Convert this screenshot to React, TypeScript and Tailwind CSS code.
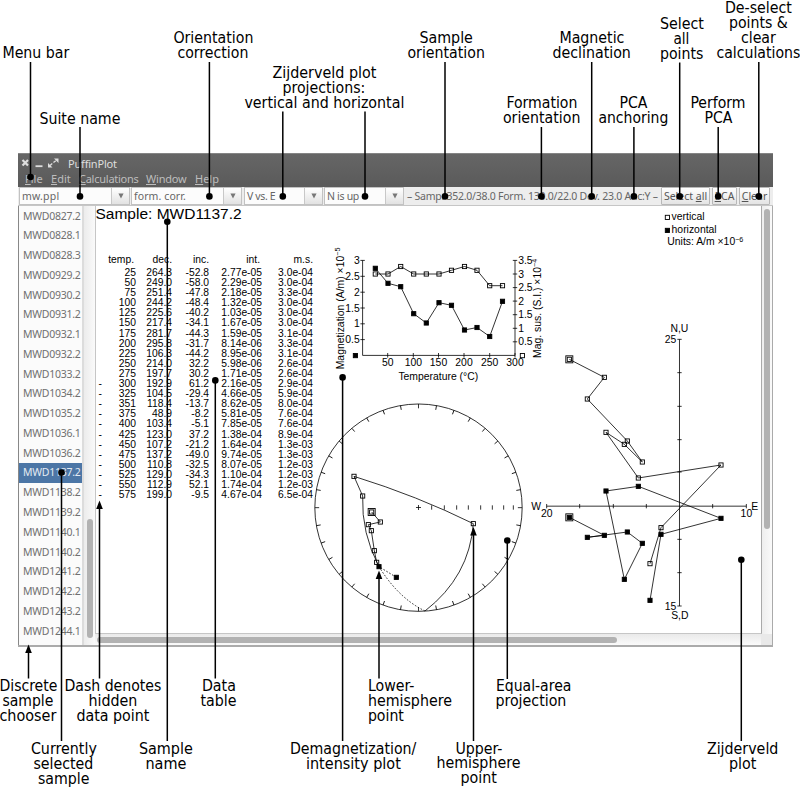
import React from "react";

const samples = [
  "MWD0827.2", "MWD0828.1", "MWD0828.3", "MWD0929.2", "MWD0930.2", "MWD0931.2", "MWD0932.1", "MWD0932.2",
  "MWD1033.2", "MWD1034.2", "MWD1035.2", "MWD1036.1", "MWD1036.2", "MWD1137.2", "MWD1138.2", "MWD1139.2",
  "MWD1140.1", "MWD1140.2", "MWD1241.2", "MWD1242.2", "MWD1243.2", "MWD1244.1",
];

// hidden marker, temperature, declination, inclination, intensity, susceptibility
const rows: string[][] = [
  ["", "25", "264.3", "-52.8", "2.77e-05", "3.0e-04"],
  ["", "50", "249.0", "-58.0", "2.29e-05", "3.0e-04"],
  ["", "75", "251.4", "-47.8", "2.18e-05", "3.3e-04"],
  ["", "100", "244.2", "-48.4", "1.32e-05", "3.0e-04"],
  ["", "125", "225.6", "-40.2", "1.03e-05", "3.0e-04"],
  ["", "150", "217.4", "-34.1", "1.67e-05", "3.0e-04"],
  ["", "175", "281.7", "-44.3", "1.59e-05", "3.1e-04"],
  ["", "200", "295.8", "-31.7", "8.14e-06", "3.3e-04"],
  ["", "225", "106.3", "-44.2", "8.95e-06", "3.1e-04"],
  ["", "250", "214.0", "32.2", "5.98e-06", "2.6e-04"],
  ["", "275", "197.7", "30.2", "1.71e-05", "2.6e-04"],
  ["-", "300", "192.9", "61.2", "2.16e-05", "2.9e-04"],
  ["-", "325", "104.5", "-29.4", "4.66e-05", "5.9e-04"],
  ["-", "351", "118.4", "-13.7", "8.62e-05", "8.0e-04"],
  ["-", "375", "48.9", "-8.2", "5.81e-05", "7.6e-04"],
  ["-", "400", "103.4", "-5.1", "7.85e-05", "7.6e-04"],
  ["-", "425", "123.0", "37.2", "1.38e-04", "8.9e-04"],
  ["-", "450", "107.2", "-21.2", "1.64e-04", "1.3e-03"],
  ["-", "475", "137.2", "-49.0", "9.74e-05", "1.3e-03"],
  ["-", "500", "110.8", "-32.5", "8.07e-05", "1.2e-03"],
  ["-", "525", "129.0", "-34.3", "1.10e-04", "1.2e-03"],
  ["-", "550", "112.9", "52.1", "1.74e-04", "1.2e-03"],
  ["-", "575", "199.0", "-9.5", "4.67e-04", "6.5e-04"],
];

type Pt = [number, number];
const path = (pts: Pt[]) => pts.map((p) => p.join(",")).join(" ");

function Marks({ pts, filled, s = 4.2, w = 0.9 }: { pts: Pt[]; filled?: boolean; s?: number; w?: number }) {
  return (
    <>
      {pts.map(([x, y], i) => (
        <rect key={i} x={x - s / 2} y={y - s / 2} width={s} height={s} fill={filled ? "#000" : "none"} stroke="#000" strokeWidth={w} />
      ))}
    </>
  );
}

const susceptibility: Pt[] = [[375.3, 274], [388, 274], [400.7, 266.5], [413.7, 274], [426.3, 274], [439, 274], [451.5, 270.3], [464.5, 266.5], [477, 270.3], [489.7, 285.7], [502.5, 285.7]];
const intensity: Pt[] = [[375.3, 268.3], [388, 283.3], [400.7, 286.7], [413.7, 313.7], [426.3, 323], [439, 302.7], [451.5, 305.3], [464.5, 330], [477, 327.5], [489.7, 336.5], [502.5, 301.3]];

function IntensityPlot() {
  const xt: [number, string][] = [[387.7, "50"], [413.3, "100"], [438.5, "150"], [464, "200"], [489.7, "250"], [515, "300"]];
  const lt: [number, string][] = [[260.4, "3"], [276.3, "2.5"], [292.2, "2"], [308, "1.5"], [323.8, "1"], [339.6, "0.5"]];
  const rt: [number, string][] = [[260.4, "3.5"], [274, "3"], [287.6, "2.5"], [301.1, "2"], [314.7, "1.5"], [328.3, "1"], [341.8, "0.5"]];
  return (
    <g>
      <g stroke="#000" strokeWidth="0.8" fill="none">
        <path d="M362.6 260.4V355.4H515V260.4" />
        {xt.map(([x]) => <path key={x} d={`M${x} 353V357.6`} />)}
        {lt.map(([y]) => <path key={y} d={`M360.4 ${y}H364.8`} />)}
        {rt.map(([y]) => <path key={y} d={`M512.8 ${y}H517.2`} />)}
        <polyline points={path(susceptibility)} />
        <polyline points={path(intensity)} />
      </g>
      <Marks pts={susceptibility} />
      <Marks pts={intensity} filled />
      <Marks pts={[[355.4, 355.6]]} filled />
      <Marks pts={[[522.4, 355.6]]} />
      {xt.map(([x, t]) => <text key={t} x={x} y="366" textAnchor="middle">{t}</text>)}
      {lt.map(([y, t]) => <text key={t} x="359.8" y={y + 3.6} textAnchor="end">{t}</text>)}
      {rt.map(([y, t]) => <text key={t} x="518.2" y={y + 3.6}>{t}</text>)}
      <text x="438.3" y="379.6" textAnchor="middle">Temperature (°C)</text>
      <text transform="translate(344.4 369.3) rotate(-90)">Magnetization (A/m) ×10<tspan dy="-4" fontSize="7.2">−5</tspan></text>
      <text transform="translate(541 358) rotate(-90)">Mag. sus. (S.I.) ×10<tspan dy="-4" fontSize="7.2">−4</tspan></text>
    </g>
  );
}

// Polar and Zijderveld geometry is held in a unit grid three times finer than a pixel.
const stereoOpen: Pt[] = [[185, 366], [211, 396], [175, 404], [184, 422], [193, 482], [200, 517], [158, 318], [132, 259], [490, 401]];

function EqualAreaPlot() {
  return (
    <g transform="translate(310 390) scale(0.333333)" stroke="#000" strokeWidth="2.4" fill="none">
      <circle cx="325.5" cy="353" r="311" />
      {Array.from({ length: 36 }, (_, i) => (
        <path key={i} d="M325.5 42V55" transform={`rotate(${i * 10} 325.5 353)`} />
      ))}
      <path d="M318 352.500H333M325.500 345V360" />
      {[365, 403, 440, 475, 512, 547, 581, 610].map((x) => <path key={x} d={`M${x} 346V359`} />)}
      <polyline points="185,366 211,396 175,404 184,422 193,482 200,517 207,530" />
      <path d="M207 530Q154 430 158 318L132 259Q322 318 490 401Q478 560 345 663" />
      <path d="M345 663Q265 624 207 530L259 562" strokeDasharray="5 5" />
      <Marks pts={stereoOpen} s={12.5} w={2.7} />
      <Marks pts={[[185, 366]]} s={21} w={2.7} />
      <Marks pts={[[207, 530], [259, 562]]} filled s={12.5} w={2.7} />
    </g>
  );
}

const zVertical: Pt[] = [[133, 133], [238, 187], [187, 252], [307, 378], [352, 441], [298, 388], [243, 352], [340, 489], [588, 450], [408, 638], [375, 746]];
const zHorizontal: Pt[] = [[133, 607], [238, 661], [187, 667], [307, 651], [352, 685], [298, 793], [243, 528], [340, 514], [588, 610], [408, 658], [375, 856]];

function ZijderveldPlot() {
  return (
    <g>
      <g transform="translate(525 315) scale(0.333333)" stroke="#000" strokeWidth="2.4" fill="none">
        <path d="M463.500 73V873M65 573.500H664" />
        {[73, 173, 274, 374, 471, 673, 773, 873].map((y) => <path key={y} d={`M457 ${y}H470`} />)}
        {[65, 164, 265, 364, 563, 664].map((x) => <path key={x} d={`M${x} 567V580`} />)}
        <polyline points={path(zVertical)} />
        <polyline points={path(zHorizontal)} />
        <Marks pts={zVertical} s={12.5} w={2.7} />
        <Marks pts={zHorizontal} filled s={12.5} w={2.7} />
        <Marks pts={[[133, 133], [133, 607]]} s={21} w={2.7} />
      </g>
      <text x="679.4" y="332.4" textAnchor="middle">N,U</text>
      <text x="676.4" y="342.8" textAnchor="end">25</text>
      <text x="676.4" y="610" textAnchor="end">15</text>
      <text x="679.8" y="618.8" textAnchor="middle">S,D</text>
      <text x="531.3" y="510">W</text>
      <text x="751.2" y="510">E</text>
      <text x="546.7" y="517" textAnchor="middle">20</text>
      <text x="746.4" y="517" textAnchor="middle">10</text>
      <Marks pts={[[667.4, 217.4]]} />
      <Marks pts={[[667.4, 230.4]]} filled />
      <text x="671.6" y="219.8">vertical</text>
      <text x="671.6" y="232.8">horizontal</text>
      <text x="667.3" y="245.4">Units: A/m ×10<tspan dy="-3.600" fontSize="7.200">−6</tspan></text>
    </g>
  );
}

function Combo({ label, className, gap }: { label: string; className: string; gap: string }) {
  return (
    <div className={`flex h-[18px] border border-[#c2c2c2] bg-[#fcfcfc] ${className}`}>
      <span className={`flex-1 pl-[2px] text-[10.5px] leading-[16px] whitespace-nowrap text-[#666] ${gap}`}>{label}</span>
      <span className="flex w-[18px] items-center justify-center border-l border-[#c8c8c8] bg-gradient-to-b from-white to-[#e2e2e2]">
        <svg width="6" height="6" viewBox="0 0 6 6"><path d="M0.400 0.500H5.600L3 5.500Z" fill="#777" /></svg>
      </span>
    </div>
  );
}

function ToolButton({ children, className }: { children: React.ReactNode; className: string }) {
  return (
    <div className={`h-[18px] rounded-[1px] border border-[#b8b8b8] bg-gradient-to-b from-white to-[#e4e4e4] text-center text-[10.5px] leading-[16px] whitespace-nowrap text-[#555] ${className}`}>
      {children}
    </div>
  );
}

const cols = "grid grid-cols-[7px_33px_36px_37px_53px_51px] text-right";

function AppWindow() {
  return (
    <div className="mt-[153px] ml-[18px] flex h-[494px] w-[755px] flex-col border-b-2 border-[#ababab] font-['Noto_Sans',sans-serif]">
      <div className="h-[34px] shrink-0 border-t border-[#858585] bg-gradient-to-b from-[#666] to-[#5a5a5a]">
        <div className="flex h-[17px] items-center pl-[3px]">
          <svg width="42" height="12" viewBox="0 0 42 12" fill="none" stroke="#dedede">
            <path d="M1.500 3L7 8.500M7 3L1.500 8.500" strokeWidth="2.200" />
            <path d="M14.500 9.200H21.500" strokeWidth="1.800" />
            <path d="M29 8.500L35 3.500" strokeWidth="1.300" strokeDasharray="3 1.500" />
            <path d="M33 1.500H37.500V6ZM27 6V10.500H31.500Z" fill="#dedede" stroke="none" />
          </svg>
          <span className="ml-[5px] pt-px text-[11px] leading-[15px] tracking-[-0.2px] text-[#dedede]">PuffinPlot</span>
        </div>
        <div className="flex h-[16px] items-center pl-[7px] text-[11px] leading-[16px] whitespace-nowrap text-[#bdbdbd]">
          <span className="w-[26px]"><u>F</u>ile</span>
          <span className="w-[28px]"><u>E</u>dit</span>
          <span className="w-[67px] tracking-[-0.25px]"><u>C</u>alculations</span>
          <span className="w-[49px] tracking-[-0.2px]"><u>W</u>indow</span>
          <span><u>H</u>elp</span>
        </div>
      </div>
      <div className="flex h-[19px] shrink-0 items-center border-b border-[#c6c6c6] bg-[#ededed] pl-[1px]">
        <Combo label="mw.ppl" className="w-[111px]" gap="tracking-[0.2px]" />
        <Combo label="form. corr." className="ml-[1px] w-[111px]" gap="tracking-[0.1px]" />
        <Combo label="V vs. E" className="ml-[2px] w-[79px]" gap="tracking-[-0.35px]" />
        <Combo label="N is up" className="ml-[1px] w-[80px]" gap="tracking-[-0.3px]" />
        <span className="w-[257px] pl-[3px] text-[10.5px] leading-[16px] tracking-[-0.25px] whitespace-nowrap text-[#666]">– Samp. 352.0/38.0 Form. 130.0/22.0 Dev. 23.0 Anc:Y –</span>
        <ToolButton className="w-[49px]">Select <u>a</u>ll</ToolButton>
        <ToolButton className="ml-[2px] w-[25px]"><u>P</u>CA</ToolButton>
        <ToolButton className="ml-[2px] w-[31px]"><u>C</u>lear</ToolButton>
      </div>
      <div className="flex min-h-0 flex-1">
        <div className="w-[66px] border-r-2 border-l border-[#dcdcdc] border-l-[#888] bg-[#fbfbfb] pt-[0.5px]">
          {samples.map((s) => (
            <div
              key={s}
              className={`h-[19.78px] pl-[4px] text-[10.5px] leading-[19.5px] tracking-[-0.25px] ${s === "MWD1137.2" ? "bg-[#4c76a6] text-[#e4eaf2]" : "text-[#707070]"}`}
            >
              {s}
            </div>
          ))}
        </div>
        <div className="flex w-[11px] flex-col items-center bg-gradient-to-r from-[#ececec] to-[#fafafa]">
          <div className="mt-[313px] h-[119px] w-[6px] rounded-full bg-[#b2b2b2]" />
        </div>
        <div className="flex flex-1 flex-col">
          <div className="flex h-[428px]">
            <div className="relative w-[667px] border-r border-b border-l border-[#c6c6c6] border-r-[#aaa] bg-white font-['Liberation_Sans',sans-serif] text-black">
              <div className="-ml-[0.5px] h-[48px] text-[15.5px] leading-[16px]">Sample: MWD1137.2</div>
              <div className={`${cols} text-[10.3px] leading-[12px]`}>
                <span />
                <span className="-ml-1 pr-[2px]">temp.</span>
                <span>dec.</span>
                <span>inc.</span>
                <span className="pr-[2px]">int.</span>
                <span>m.s.</span>
              </div>
              <div className="pt-[2px] text-[10.3px] leading-[10.1px]">
                {rows.map((r) => (
                  <div key={r[1]} className={`${cols} h-[10.1px]`}>
                    <span className="pr-[1px]">{r[0]}</span>
                    {r.slice(1).map((c, i) => <span key={i}>{c}</span>)}
                  </div>
                ))}
              </div>
              <svg className="absolute top-0 -left-px h-[428px] w-[667px] font-['Liberation_Sans',sans-serif] text-[10.4px]" viewBox="95 206 667 428">
                <IntensityPlot />
                <EqualAreaPlot />
                <ZijderveldPlot />
              </svg>
            </div>
            <div className="flex w-[11px] justify-center border-r border-[#aaa] bg-gradient-to-r from-[#eee] to-[#fafafa]">
              <div className="mt-[3px] h-[320px] w-[6px] rounded-full bg-[#b2b2b2]" />
            </div>
          </div>
          <div className="flex flex-1 items-center border-r border-[#aaa] bg-gradient-to-b from-[#eaeaea] to-[#fafafa] pl-[2px]">
            <div className="h-[6px] w-[520px] rounded-full bg-[#b2b2b2]" />
            <div className="ml-auto h-full w-[11px] bg-[#e9e9e9]" />
          </div>
        </div>
      </div>
    </div>
  );
}

// left edge, right edge, baseline, text
const labels: [number, number, number, string][] = [
  [3, 69, 58, "Menu bar"], [40, 120, 124, "Suite name"],
  [174, 253, 43, "Orientation"], [178, 248, 58, "correction"],
  [273, 376, 78, "Zijderveld plot"], [283, 365, 93, "projections:"], [245, 404, 108, "vertical and horizontal"],
  [420, 472.5, 43, "Sample"], [408, 484.5, 58, "orientation"],
  [507, 577, 108, "Formation"], [503.5, 580, 123, "orientation"],
  [560, 624, 43, "Magnetic"], [553, 630.5, 58, "declination"],
  [620, 647, 108, "PCA"], [599, 668, 123, "anchoring"],
  [660.5, 703.5, 29, "Select"], [674, 689, 44, "all"], [660.5, 703, 59, "points"],
  [691, 745, 108, "Perform"], [705, 732, 123, "PCA"],
  [725.5, 791.5, 13, "De-select"], [729.5, 787.5, 28, "points &"], [741.5, 775.5, 43, "clear"], [717, 800, 58, "calculations"],
  [0, 57, 691, "Discrete"], [3, 53, 706, "sample"], [0, 56, 721, "chooser"],
  [65, 161, 691, "Dash denotes"], [89, 137, 706, "hidden"], [77, 149, 721, "data point"],
  [202.5, 235.5, 691, "Data"], [201, 236, 706, "table"],
  [368.5, 414, 691, "Lower-"], [368.5, 451.5, 706, "hemisphere"], [368.5, 403.5, 721, "point"],
  [496.5, 571, 691, "Equal-area"], [496, 566, 706, "projection"],
  [31.5, 96.5, 754, "Currently"], [34, 93, 769, "selected"], [38.5, 89, 784, "sample"],
  [139.5, 192.5, 754, "Sample"], [146, 186, 769, "name"],
  [290.5, 416, 754, "Demagnetization/"], [306.5, 400.5, 769, "intensity plot"],
  [456, 502, 754, "Upper-"], [437, 520, 768.5, "hemisphere"], [461, 496.5, 783, "point"],
  [707.5, 778, 754, "Zijderveld"], [729.5, 756, 769, "plot"],
];

// x, end at the label, end at the target, arrow head instead of a dot
const leaders: [number, number, number, boolean?][] = [
  [30.5, 62, 177], [80, 127, 196.4], [209.4, 62, 196.4], [282.8, 111.5, 196.4], [365, 111.5, 196.4],
  [445, 62, 196.4], [541.4, 127, 196.4], [591.7, 62, 196.4], [633.9, 127, 196.4], [679.7, 62.5, 196.4],
  [718.2, 127, 196.4], [758.8, 62, 196.4],
  [28.5, 678.5, 644.5, true], [61.5, 741, 472.6], [99.5, 678.5, 500.6, true], [167.3, 741, 221.7],
  [215.3, 678.5, 380.4], [342.6, 741, 377.4], [379, 678.5, 570.5, true], [473.5, 741, 527, true],
  [507.3, 679, 540.5], [741.3, 741, 559.7],
];

function Callouts() {
  return (
    <svg className="absolute inset-0 h-[787px] w-[800px] font-['DejaVu_Sans_Condensed','DejaVu_Sans',sans-serif] text-[15px]" viewBox="0 0 800 787">
      {leaders.map(([x, from, to, arrow]) => (
        <g key={x}>
          <path d={`M${x} ${from}V${arrow ? to + 6 : to}`} stroke="#000" strokeWidth="1.500" />
          {arrow ? <path d={`M${x} ${to}L${x + 3.3} ${to + 8.4}H${x - 3.3}Z`} /> : <circle cx={x} cy={to} r="3.300" />}
        </g>
      ))}
      {labels.map(([l, r, y, t], i) => (
        <text key={i} x={l - 0.6} y={y - 0.5} textLength={r - l + 1} lengthAdjust="spacingAndGlyphs">{t}</text>
      ))}
    </svg>
  );
}

export default function App() {
  return (
    <div className="relative h-[787px] w-[800px] overflow-hidden bg-white">
      <div className="flex">
        <AppWindow />
      </div>
      <Callouts />
    </div>
  );
}
